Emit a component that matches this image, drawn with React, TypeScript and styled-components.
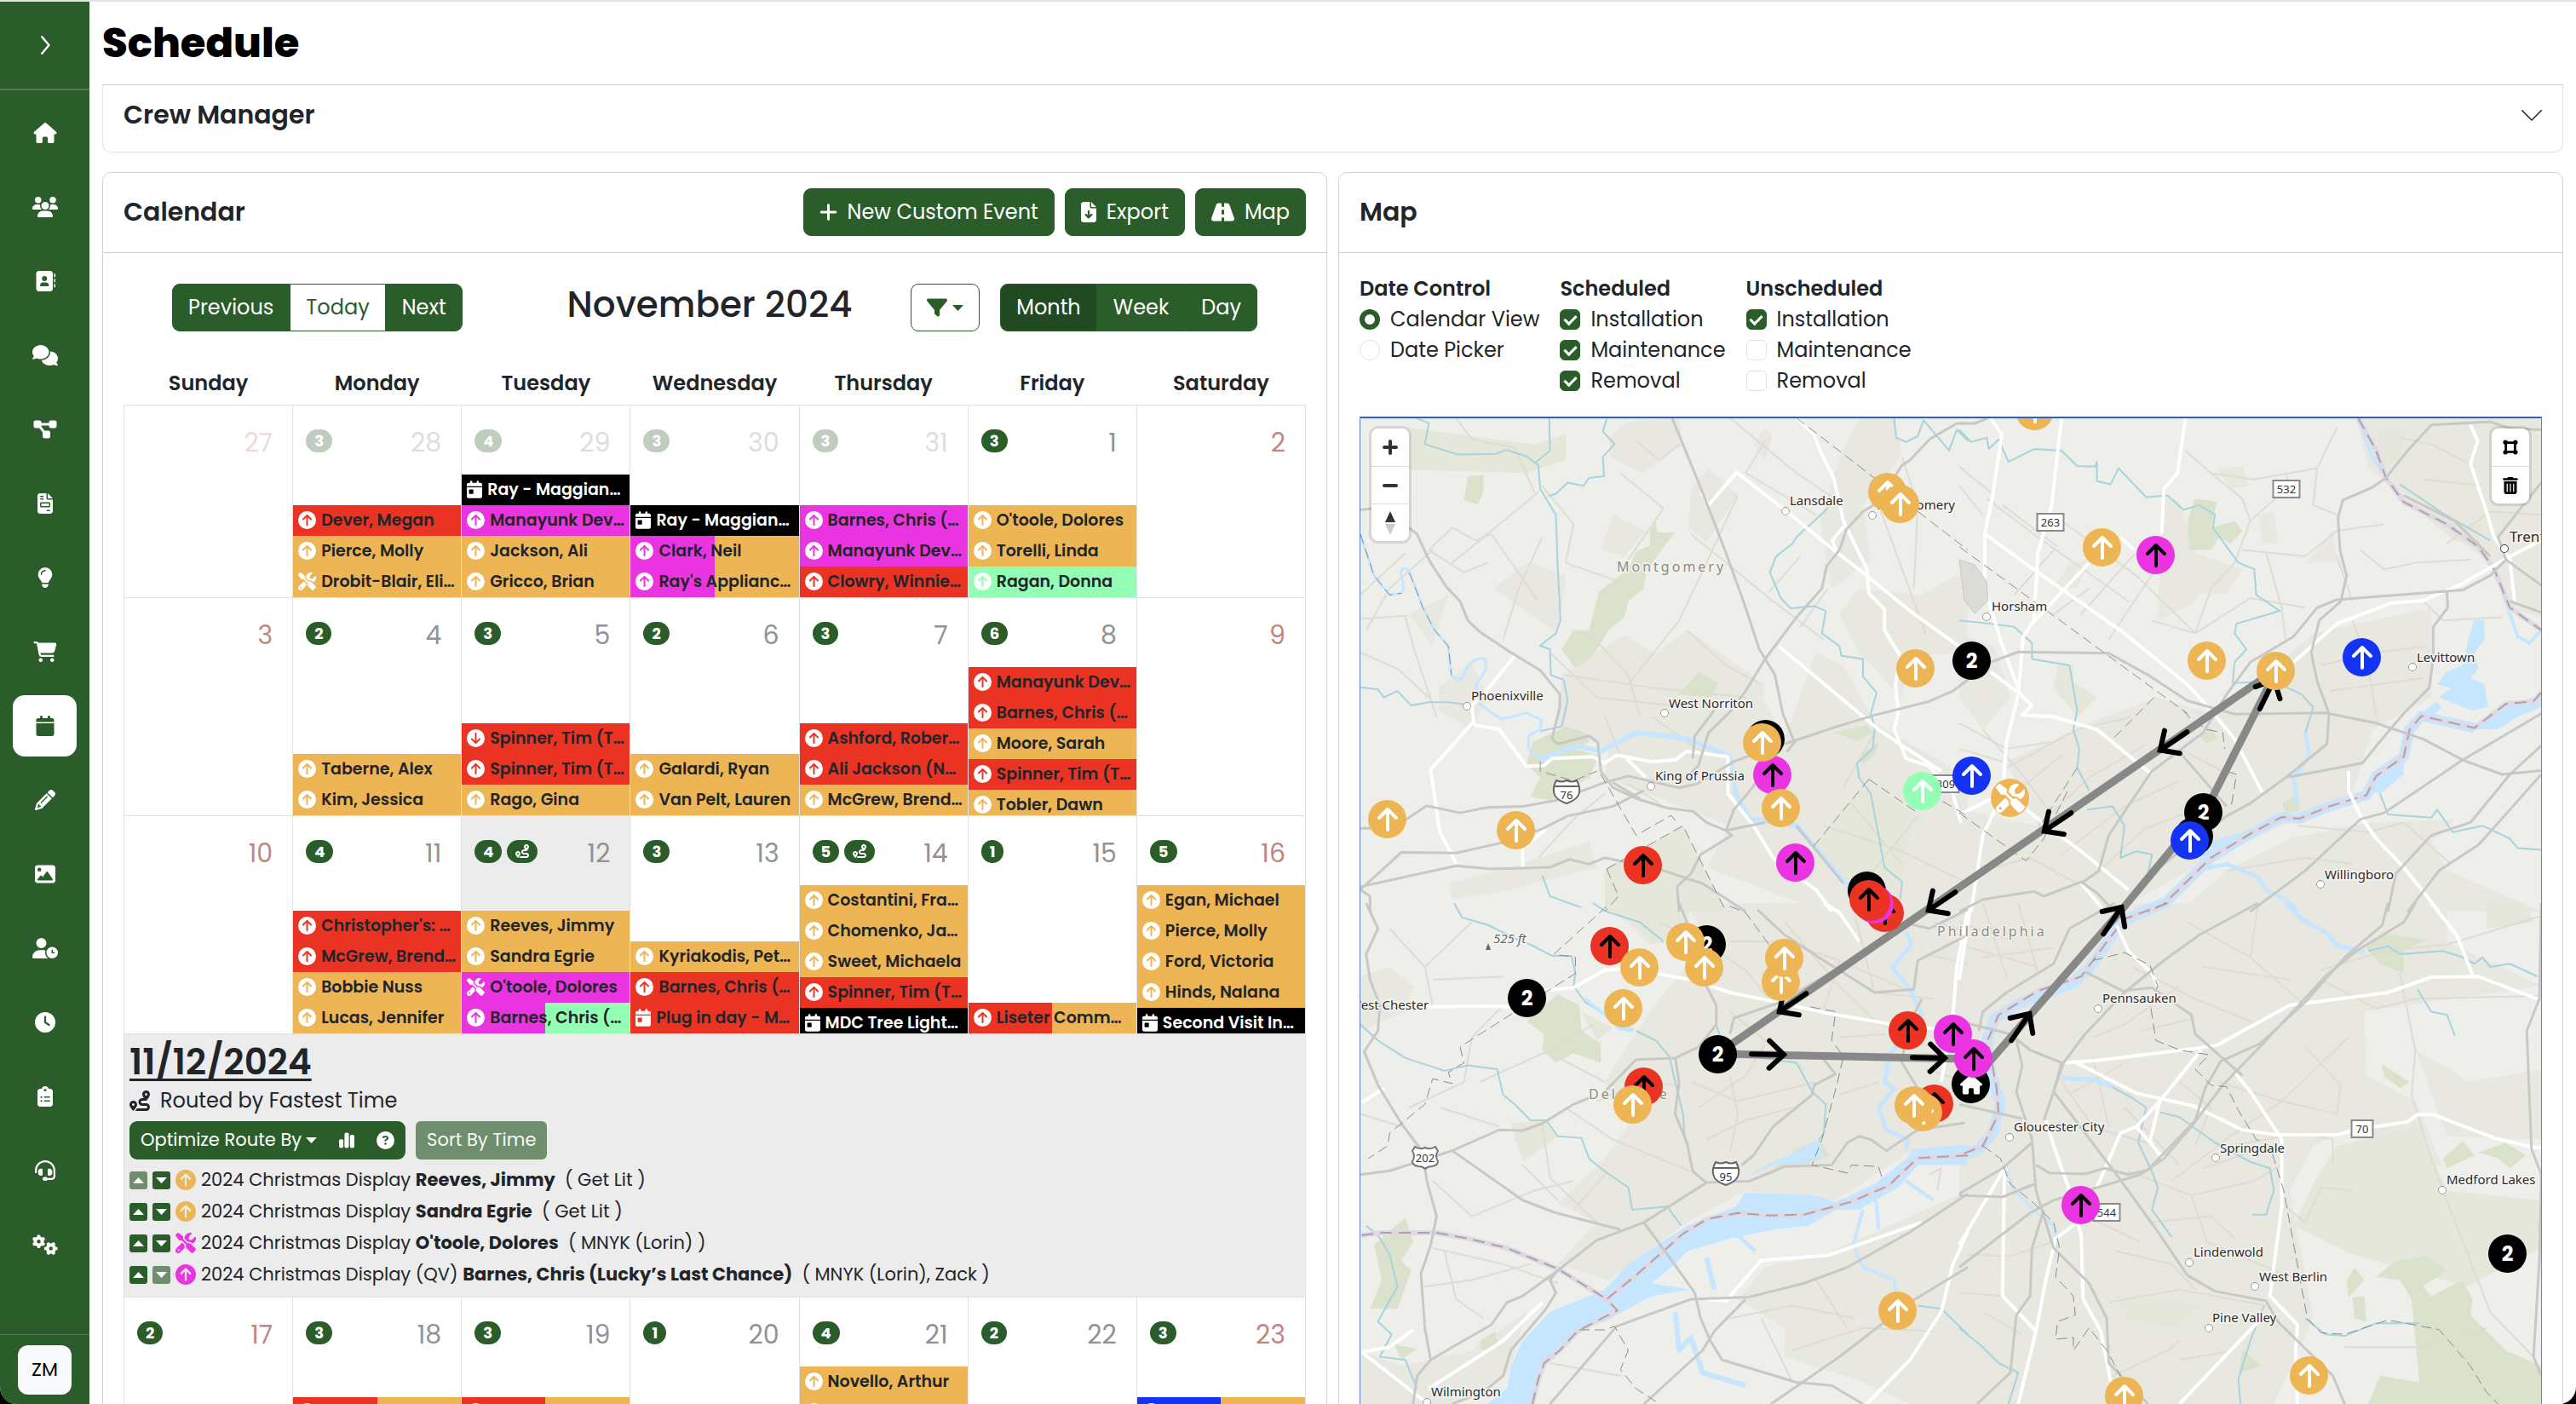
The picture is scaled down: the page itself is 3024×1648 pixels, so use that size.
import React, { useState } from "react";
import styled, { createGlobalStyle, css } from "styled-components";
import {
  FaHouse, FaUsers, FaAddressBook, FaComments, FaDiagramProject, FaFileInvoice, FaLightbulb,
  FaCartShopping, FaCalendar, FaPencil, FaImage, FaUserClock, FaClock, FaClipboardList,
  FaHeadset, FaGears, FaPlus, FaFileArrowDown, FaRoad, FaFilter, FaRoute, FaChartSimple,
  FaCircleQuestion, FaCircleArrowUp, FaCircleArrowDown, FaScrewdriverWrench, FaCalendarDay,
  FaTrashCan,
} from "react-icons/fa6";

const green = "#2b5d2a";
const ink = "#212529";
const line = "#dee2e6";
const edge = "#d2d2d4";

const GlobalStyle = createGlobalStyle`
  * { box-sizing: border-box; }
  body {
    margin: 0;
    background: #000;
    color: ${ink};
    font-family: Poppins, Inter, "Open Sans", sans-serif;
    font-size: 24px;
    line-height: 36px;
  }
  button, input { font: inherit; margin: 0; }
  button { cursor: pointer; }
`;

/* ---------- shell ---------- */

const Shell = styled.div`
  display: flex;
  height: 100vh;
  overflow: hidden;
  background: #fff;
  border-top: 2px solid #e1e1e1;
  border-radius: 0 0 20px 20px;
`;

const Sidebar = styled.nav`
  display: flex;
  flex-direction: column;
  align-items: center;
  flex: none;
  width: 105px;
  background: ${green};
`;

const SidebarToggle = styled.button`
  display: grid;
  place-items: center;
  width: 100%;
  height: 104px;
  padding: 0;
  border: 0;
  border-bottom: 2px solid #55795a;
  background: none;
  color: #fff;
`;

const NavList = styled.ul`
  display: flex;
  flex-direction: column;
  gap: 15px;
  flex: 1;
  margin: 0;
  padding: 14px 0 0;
  list-style: none;
`;

const NavLink = styled.a<{ $active?: boolean }>`
  display: grid;
  place-items: center;
  width: 75px;
  height: 72px;
  border-radius: 14px;
  color: ${(p) => (p.$active ? green : "#fff")};
  background: ${(p) => (p.$active ? "#fff" : "none")};
  svg { display: block; height: 24px; width: 30px; }
`;

const Account = styled.div`
  width: 100%;
  padding: 12px 21px 11px;
  border-top: 1px solid #55795a;
`;

const Avatar = styled.button`
  width: 100%;
  height: 58px;
  padding: 0;
  border: 0;
  border-radius: 12px;
  background: #f8f9fa;
  color: #000;
  font-size: 22px;
`;

const Main = styled.main`
  flex: 1;
  min-width: 0;
  padding: 16px 15px 0 15px;
`;

const PageTitle = styled.h1`
  margin: 0 0 15px;
  font-size: 48px;
  line-height: 66px;
  font-weight: 800;
  color: #000;
`;

const CrewPanel = styled.button`
  display: flex;
  justify-content: space-between;
  align-items: center;
  width: 100%;
  height: 80px;
  padding: 0 24px 8px;
  border: 1px solid ${line};
  border-top-color: #d0d0d0;
  border-radius: 0 0 10px 10px;
  background: #fff;
  color: ${ink};
  text-align: left;
`;

const Heading = styled.h2`
  margin: 0;
  font-size: 30px;
  font-weight: 600;
`;

const Columns = styled.div`
  display: grid;
  grid-template-columns: minmax(0, 1fr) minmax(0, 1fr);
  gap: 13px;
  margin-top: 23px;
`;

const Card = styled.section`
  border: 1px solid ${edge};
  border-radius: 10px;
  background: #fff;
`;

const CardHeader = styled.header`
  display: flex;
  justify-content: space-between;
  align-items: center;
  height: 94px;
  padding: 0 24px 2px;
  border-bottom: 1px solid ${edge};
`;

const CardBody = styled.div`
  padding: 24px;
`;

const HeaderActions = styled.div`
  display: flex;
  gap: 12px;
`;

/* ---------- buttons ---------- */

const Button = styled.button<{ $tone?: "solid" | "active" | "outline" }>`
  display: inline-flex;
  align-items: center;
  gap: 12px;
  height: 56px;
  padding: 0 18px;
  border: 1px solid ${green};
  border-radius: 9px;
  background: ${(p) => (p.$tone === "outline" ? "#fff" : p.$tone === "active" ? "#224a22" : green)};
  color: ${(p) => (p.$tone === "outline" ? green : "#fff")};
  white-space: nowrap;
`;

const Glyph = styled.span<{ $w: number }>`
  display: inline-flex;
  flex: none;
  width: ${(p) => p.$w}px;
  svg { width: 100%; }
`;

const ButtonGroup = styled.div`
  display: inline-flex;
  & > button { border-radius: 0; }
  & > button:first-child { border-radius: 9px 0 0 9px; }
  & > button:last-child { border-radius: 0 9px 9px 0; }
`;

const FilterButton = styled(Button)`
  gap: 6px;
`;

const Toolbar = styled.div`
  display: grid;
  grid-template-columns: 1fr auto 1fr;
  align-items: center;
  padding: 12px 57px 35px;
`;

const ToolbarEnd = styled.div`
  display: flex;
  justify-content: flex-end;
  gap: 24px;
`;

const MonthTitle = styled.h3`
  margin: 0 12px 6px 0;
  font-size: 42px;
  line-height: 48px;
  font-weight: 500;
`;

/* ---------- calendar ---------- */

const Calendar = styled.table`
  width: 100%;
  table-layout: fixed;
  border-collapse: collapse;
  th { height: 51px; padding: 2px 0 0; font-weight: 600; }
  td { padding: 0; border: 1px solid ${line}; vertical-align: top; }
`;

const DayBox = styled.div<{ $tall?: boolean; $selected?: boolean }>`
  display: flex;
  flex-direction: column;
  height: ${(p) => (p.$tall ? 255 : 225)}px;
  background: ${(p) => (p.$selected ? "#ececec" : "#fff")};
`;

const DayHead = styled.div<{ $muted?: boolean }>`
  display: flex;
  align-items: center;
  gap: 6px;
  flex: none;
  height: 81px;
  padding: 2px 23px 0 15px;
  opacity: ${(p) => (p.$muted ? 0.3 : 1)};
`;

const CountBadge = styled.span`
  display: grid;
  place-items: center;
  height: 27px;
  padding: 0 10px;
  border-radius: 14px;
  background: ${green};
  color: #fff;
  font-size: 18px;
  line-height: 27px;
  font-weight: 700;
`;

const DayNumber = styled.span<{ $weekend?: boolean }>`
  margin-left: auto;
  padding-top: 6px;
  font-size: 30px;
  color: ${(p) => (p.$weekend ? "#c08782" : "#909294")};
`;

const EventList = styled.ul`
  flex: 0 1 auto;
  min-height: 0;
  margin: auto 0 0;
  padding: 0;
  overflow: hidden;
  list-style: none;
`;

const tones: Record<string, string> = {
  o: "#edb554", r: "#ea3323", m: "#ea33e1", k: "#000", g: "#92ffb4", b: "#1433f5",
};

const EventRow = styled.li<{ $from: string; $to: string }>`
  height: 36px;
  background: ${(p) => `linear-gradient(90deg, ${tones[p.$from]} 50%, ${tones[p.$to]} 50%)`};
  color: ${(p) => (p.$from === "k" ? "#fff" : ink)};
`;

const EventLink = styled.a`
  display: flex;
  align-items: center;
  gap: 6px;
  height: 36px;
  padding-left: 6px;
  overflow: hidden;
  color: inherit;
  font-size: 19px;
  font-weight: 600;
  text-decoration: none;
  white-space: nowrap;
  svg { color: #fff; height: 21px; }
`;

/* ---------- selected day ---------- */

const DayPanel = styled.div`
  height: 308px;
  padding: 6px 6px 0;
  background: #ececec;
`;

const DayTitle = styled.h3`
  margin: 0;
  font-size: 42px;
  line-height: 54px;
  font-weight: 600;
  text-decoration: underline;
  text-decoration-thickness: 3px;
  text-underline-offset: 5px;
`;

const RouteNote = styled.p`
  display: flex;
  align-items: center;
  gap: 12px;
  margin: 0;
`;

const RouteActions = styled.div`
  display: flex;
  gap: 12px;
  padding: 6px 0;
`;

const SmallButton = styled.button`
  display: inline-flex;
  align-items: center;
  gap: 5px;
  height: 45px;
  padding: 0 13px;
  border: 0;
  border-radius: 6px;
  background: ${green};
  color: #fff;
  font-size: 21px;
  &:disabled { opacity: 0.65; }
`;

const StopList = styled.ol`
  display: grid;
  grid-auto-rows: 37px;
  margin: 0;
  padding: 0;
  list-style: none;
`;

const Stop = styled.li<{ $tone: string }>`
  display: flex;
  align-items: center;
  gap: 6px;
  font-size: 21px;
  white-space: pre;
  & > svg { color: ${(p) => tones[p.$tone]}; flex: none; }
  b { font-weight: 700; }
`;

const MoveButton = styled.button`
  display: grid;
  place-items: center;
  width: 21px;
  height: 21px;
  padding: 0;
  border: 0;
  border-radius: 3px;
  background: ${green};
  color: #fff;
  &:disabled { opacity: 0.65; }
`;

/* ---------- map options ---------- */

const Options = styled.div`
  display: flex;
  gap: 24px;
  margin-bottom: 24px;
`;

const OptionGroup = styled.fieldset`
  min-width: 0;
  height: 144px;
  margin: 0;
  padding: 0;
  border: 0;
  legend { padding: 0; font-weight: 600; }
`;

const Option = styled.label`
  display: flex;
  align-items: center;
  gap: 12px;
  height: 36px;
`;

const box = css`
  appearance: none;
  flex: none;
  width: 24px;
  height: 24px;
  border: 1px solid ${line};
  background: #fff;
`;

const Radio = styled.input.attrs({ type: "radio" })`
  ${box}
  border-radius: 50%;
  &:checked { border: 6px solid ${green}; }
`;

const Check = styled.input.attrs({ type: "checkbox" })`
  ${box}
  display: grid;
  place-items: center;
  border-radius: 6px;
  &:checked { border-color: ${green}; background: ${green}; }
  &:checked::before {
    content: "";
    width: 6px;
    height: 11px;
    margin-bottom: 3px;
    border: solid #fff;
    border-width: 0 3px 3px 0;
    transform: rotate(45deg);
  }
`;

/* ---------- map ---------- */

const MapFrame = styled.div`
  position: relative;
  height: 1180px;
  overflow: hidden;
  border: 1px solid #5b86d8;
  border-top: 2px solid #2b5fd0;
  background: #eeefeb;
`;

const MapDrawing = styled.svg`
  position: absolute;
  top: -2px;
  left: -1px;
  display: block;
  font-family: "Noto Sans", sans-serif;
`;

const PinButton = styled.button<{ $x: number; $y: number; $fill: string; $dark?: boolean }>`
  position: absolute;
  left: ${(p) => p.$x - 1597}px;
  top: ${(p) => p.$y - 491}px;
  display: grid;
  place-items: center;
  width: 45px;
  height: 45px;
  margin: -22px 0 0 -22px;
  padding: 0;
  border: 0;
  border-radius: 50%;
  background: ${(p) => p.$fill};
  color: ${(p) => (p.$dark ? "#000" : "#fff")};
  font-size: 24px;
  font-weight: 700;
  line-height: 24px;
`;

const MapControls = styled.div<{ $right?: boolean }>`
  position: absolute;
  top: 12px;
  ${(p) => (p.$right ? "right: 14px;" : "left: 13px;")}
  display: grid;
  width: 44px;
  border-radius: 8px;
  background: #fff;
  box-shadow: 0 0 0 3px rgba(0, 0, 0, 0.1);
`;

const ControlButton = styled.button`
  display: grid;
  place-items: center;
  height: 44px;
  padding: 0;
  border: 0;
  background: none;
  color: #000;
  & + & { border-top: 1px solid #ddd; }
`;

/* ---------- data ---------- */

const navItems = [
  { label: "Home", icon: FaHouse }, { label: "Customers", icon: FaUsers },
  { label: "Contacts", icon: FaAddressBook }, { label: "Messages", icon: FaComments },
  { label: "Projects", icon: FaDiagramProject }, { label: "Invoices", icon: FaFileInvoice },
  { label: "Ideas", icon: FaLightbulb }, { label: "Cart", icon: FaCartShopping },
  { label: "Schedule", icon: FaCalendar }, { label: "Design", icon: FaPencil },
  { label: "Photos", icon: FaImage }, { label: "Staff time", icon: FaUserClock },
  { label: "Time", icon: FaClock }, { label: "Tasks", icon: FaClipboardList },
  { label: "Support", icon: FaHeadset }, { label: "Settings", icon: FaGears },
];

type Ev = [tone: string, name: string, icon?: "down" | "tools" | "cal"];
type Day = { n: number; count?: number; muted?: boolean; route?: boolean; selected?: boolean; events?: Ev[] };

const weeks: Day[][] = [
  [
    { n: 27, muted: true },
    { n: 28, muted: true, count: 3, events: [["r", "Dever, Megan"], ["o", "Pierce, Molly"], ["o", "Drobit-Blair, Eli…", "tools"]] },
    { n: 29, muted: true, count: 4, events: [["k", "Ray - Maggian…", "cal"], ["m", "Manayunk Dev…"], ["o", "Jackson, Ali"], ["o", "Gricco, Brian"]] },
    { n: 30, muted: true, count: 3, events: [["k", "Ray - Maggian…", "cal"], ["mo", "Clark, Neil"], ["mo", "Ray's Applianc…"]] },
    { n: 31, muted: true, count: 3, events: [["m", "Barnes, Chris (…"], ["m", "Manayunk Dev…"], ["r", "Clowry, Winnie…"]] },
    { n: 1, count: 3, events: [["o", "O'toole, Dolores"], ["o", "Torelli, Linda"], ["g", "Ragan, Donna"]] },
    { n: 2 },
  ],
  [
    { n: 3 },
    { n: 4, count: 2, events: [["o", "Taberne, Alex"], ["o", "Kim, Jessica"]] },
    { n: 5, count: 3, events: [["r", "Spinner, Tim (T…", "down"], ["r", "Spinner, Tim (T…"], ["o", "Rago, Gina"]] },
    { n: 6, count: 2, events: [["o", "Galardi, Ryan"], ["o", "Van Pelt, Lauren"]] },
    { n: 7, count: 3, events: [["r", "Ashford, Rober…"], ["r", "Ali Jackson (N…"], ["o", "McGrew, Brend…"]] },
    { n: 8, count: 6, events: [["r", "Manayunk Dev…"], ["r", "Barnes, Chris (…"], ["o", "Moore, Sarah"], ["r", "Spinner, Tim (T…"], ["o", "Tobler, Dawn"]] },
    { n: 9 },
  ],
  [
    { n: 10 },
    { n: 11, count: 4, events: [["r", "Christopher's: …"], ["r", "McGrew, Brend…"], ["o", "Bobbie Nuss"], ["o", "Lucas, Jennifer"]] },
    { n: 12, count: 4, route: true, selected: true, events: [["o", "Reeves, Jimmy"], ["o", "Sandra Egrie"], ["m", "O'toole, Dolores", "tools"], ["mg", "Barnes, Chris (…"]] },
    { n: 13, count: 3, events: [["o", "Kyriakodis, Pet…"], ["r", "Barnes, Chris (…"], ["r", "Plug in day - M…", "cal"]] },
    { n: 14, count: 5, route: true, events: [["o", "Costantini, Fra…"], ["o", "Chomenko, Ja…"], ["o", "Sweet, Michaela"], ["r", "Spinner, Tim (T…"], ["k", "MDC Tree Light…", "cal"]] },
    { n: 15, count: 1, events: [["ro", "Liseter Comm…"]] },
    { n: 16, count: 5, events: [["o", "Egan, Michael"], ["o", "Pierce, Molly"], ["o", "Ford, Victoria"], ["o", "Hinds, Nalana"], ["k", "Second Visit In…", "cal"]] },
  ],
  [
    { n: 17, count: 2 },
    { n: 18, count: 3, events: [["ro", "Liseter Comm…"], ["o", "Pierce, Molly"], ["o", "Kim, Jessica"]] },
    { n: 19, count: 3, events: [["ro", "Spinner, Linda"], ["o", "Rago, Gina"], ["o", "Jackson, Ali"]] },
    { n: 20, count: 1 },
    { n: 21, count: 4, events: [["o", "Novello, Arthur"], ["o", "Galardi, Ryan"], ["o", "Moore, Sarah"], ["o", "Tobler, Dawn"]] },
    { n: 22, count: 2 },
    { n: 23, count: 3, events: [["bo", "Christine Holt"], ["o", "Ford, Victoria"], ["o", "Hinds, Nalana"]] },
  ],
];

const stops = [
  { tone: "o", title: "2024 Christmas Display ", who: "Reeves, Jimmy", crew: "  ( Get Lit )" },
  { tone: "o", title: "2024 Christmas Display ", who: "Sandra Egrie", crew: "  ( Get Lit )" },
  { tone: "m", title: "2024 Christmas Display ", who: "O'toole, Dolores", crew: "  ( MNYK (Lorin) )", tools: true },
  { tone: "m", title: "2024 Christmas Display (QV) ", who: "Barnes, Chris (Lucky’s Last Chance)", crew: "  ( MNYK (Lorin), Zack )" },
];

/* Pins, back to front: x, y, tone, glyph ("u" arrow up, "2" cluster, "t" tools, "h" home, "" plain) */
const pins: [number, number, string, string][] = [
  [2215, 577, "o", "u"], [2230, 591, "o", "u"], [2248, 784, "o", "u"], [2314, 775, "k", "2"],
  [2072, 867, "k", ""], [2080, 909, "m", "u"], [2068, 871, "o", "u"], [2090, 948, "o", "u"],
  [2256, 928, "g", "u"], [2314, 910, "b", "u"], [1628, 961, "o", "u"], [1779, 974, "o", "u"],
  [1928, 1015, "r", "u"], [2107, 1012, "m", "u"], [2191, 1045, "k", ""], [2212, 1071, "r", "u"],
  [2200, 1061, "m", ""], [2196, 1058, "r", ""], [2193, 1055, "r", "u"],
  [2388, 482, "o", "u"], [2467, 642, "o", "u"], [2530, 651, "m", "u"], [2590, 775, "o", "u"],
  [2671, 787, "o", "u"], [2772, 771, "b", "u"], [2359, 936, "o", "t"], [2586, 953, "k", "2"],
  [2575, 981, "k", ""], [2570, 986, "b", "u"],
  [1889, 1110, "r", "u"], [2003, 1108, "k", "2"], [1978, 1105, "o", "u"], [2000, 1135, "o", "u"],
  [1924, 1135, "o", "u"], [1905, 1183, "o", "u"], [1792, 1171, "k", "2"], [2090, 1152, "o", "u"],
  [2094, 1124, "o", "u"], [2016, 1237, "k", "2"], [2239, 1209, "r", "u"], [2313, 1272, "k", "h"],
  [2292, 1213, "m", "u"], [2316, 1242, "m", "u"], [1929, 1275, "r", "u"], [1916, 1296, "o", "u"],
  [2270, 1295, "r", "u"], [2257, 1305, "o", "u"], [2246, 1297, "o", "u"],
  [2227, 1538, "o", "u"], [2442, 1414, "m", "u"], [2943, 1471, "k", "2"], [2710, 1614, "o", "u"],
  [2493, 1638, "o", "u"],
];

/* Terrain is stored per quadrant, each in its own local grid. */
type Quad = {
  m: string; urban: string[]; wood: string[]; pale?: string[]; lake?: string[];
  river: [number, string][]; stream: string; minor: string; road: string; white: string; border?: string; dash: string;
};

const quads: Quad[] = [
  {
    m: "matrix(.4592 0 0 .3763 1590 480)",
    urban: [
      "530,830 690,705 770,765 850,688 1050,860 1045,905 1100,1030 1180,760 1250,800 1330,980 1568,1150 1568,1568 1200,1568 900,1430 960,1300 640,1150 650,1060 520,990",
      "650,90 700,40 830,30 840,110 735,200 655,150", "860,250 905,185 980,270 900,415 855,370",
      "630,440 660,330 745,380 690,460", "1190,350 1240,150 1290,30 1380,30 1400,140 1300,300 1320,470 1220,560",
      "1240,640 1290,560 1450,580 1568,500 1568,760 1420,770 1400,900 1290,760", "215,870 300,790 340,900 300,1000 215,940",
      "140,640 240,580 200,740", "355,560 445,478 540,520 520,700", "1020,110 1050,60 1068,80 1050,160", "240,1480 400,1430 600,1350 620,1430 400,1500 250,1530",
    ],
    wood: [
      "770,350 775,385 820,385 790,430 745,510 740,560 700,600 690,650 650,690 610,770 565,810 530,750 560,690 600,690 610,640 625,570 700,500 720,445 755,425 755,380",
      "290,210 330,205 330,260 315,298 280,285", "455,1040 540,990 590,1010 600,1040 560,1060 625,1080 600,1150 500,1220 450,1210 475,1150 440,1110",
      "830,890 880,820 930,855 910,900", "1225,1010 1310,985 1325,1010 1285,1035", "1290,1080 1340,1040 1335,1070 1300,1110",
    ],
    pale: ["140,60 460,110 540,80 540,160 440,200 140,190", "1170,1370 1310,1160 1430,1270 1380,1568 1250,1480", "640,1435 840,1300 950,1568 640,1568"],
    river: [
      [6, "M475 1092 L570 1052 L630 1068 L720 1010 L850 1028 L960 1085 L975 1200 L1010 1280 L1090 1290 L1130 1300 L1200 1400 L1270 1500"],
      [3, "M15 390 L50 520 L90 580 L120 575 Q130 560 118 510 Q130 480 145 520 L175 620 L205 690 L240 740 L248 830 Q265 860 280 830 Q290 780 330 777 Q350 800 310 860 L320 920 L375 968 L440 948 L478 970 L475 1000 L445 1020 L445 1060 L475 1092"],
    ],
    stream: "M158 28 L190 45 L180 110 L265 142 L360 140 L388 128 L440 148 L470 175 L475 250 L515 330 L520 500 L527 660 L515 700 L475 738 L500 750 L502 830 L535 845 L545 910 L530 990 L475 1005 M498 28 L500 130 L465 165 M645 30 L635 70 L665 110 L635 150 L638 210 L600 215 L585 240 L545 230 L515 265 L495 272 M1210 310 L1130 400 L1120 420 L1078 460 L1062 510 L1090 590 L1115 622 L1175 615 L1205 630 L1195 700 L1240 740 L1245 770 L1300 780 L1300 835 L1335 885 L1320 950 L1330 990 L1325 1060 L1285 1105 L1290 1150 L1320 1200 L1340 1330 L1355 1430 L1400 1475 L1395 1530 M15 868 L60 875 L75 900 L110 880 L145 925 L190 915 L240 915 L300 925 M1380 30 L1385 90 L1410 103 L1440 85 L1455 35 L1520 130 L1540 65 L1568 100 M480 1455 L500 1520 L580 1555",
    minor: "M260 28 L300 95 L410 120 L460 260 M470 260 L400 330 L250 480 M250 370 L190 440 L280 510 L340 480 M250 370 L310 410 L350 390 L470 600 M15 655 L130 645 L150 740 L210 960 M15 760 L110 810 L190 900 M480 240 L560 360 L540 480 L680 540 M680 200 L790 310 L700 470 M960 28 L1130 200 L1240 290 M860 390 L1060 590 L1200 720 M980 270 L900 480 L830 660 L700 860 M1050 100 L1000 200 L1180 330 M500 760 L620 900 L850 930 M540 830 L760 870 L1000 900 M600 700 L700 830 L730 960 M850 690 L950 800 L1040 860 M1210 560 L1140 680 M1140 460 L1060 570 M640 1200 L560 1280 L470 1400 M700 1170 L780 1230 M15 580 L130 450 M30 690 L90 560 L200 440 M640 960 L680 1080 M760 960 L900 1080 M1330 1010 L1250 1180 M1270 1230 L1400 1420 M1440 1270 L1300 1480 M1200 1300 L1400 1380 L1568 1480 M1400 150 L1440 300 L1430 560 M1340 300 L1460 700 M720 100 L780 160 L830 110 M480 400 L420 560 L380 720",
    road: "M812 28 L890 260 L950 450 L1000 620 L1035 750 L1075 830 L1095 950 L1125 1040 L1105 1070 M15 315 L60 308 L110 345 L160 390 L190 470 L235 555 L270 600 L290 660 L320 695 L400 760 L475 815 L525 890 L525 930 L505 1030 L520 1045 L600 1020 L622 1040 L630 1130 L660 1180 L720 1215 L800 1245 L865 1255 L900 1290 L950 1315 L1050 1290 M15 1308 L60 1308 L120 1290 L185 1238 L270 1260 L340 1243 L430 1240 L520 1220 L640 1165 L700 1145 L830 1182 L875 1170 L970 1100 L1060 1060 L1125 1035 L1210 1000 L1330 955 L1470 912 L1530 880 L1568 845 M1568 45 L1540 45 L1470 95 L1420 160 L1400 175 L1340 290 L1300 320 L1258 375 L1240 440 L1207 490 L1195 560 L1130 650 L1050 780 L1000 880 L960 945 L905 1010 L880 1110 L850 1150 M950 1315 L970 1250 L1005 1200 L1080 1080 M1130 1300 L1250 1480 M950 1315 L965 1330 L885 1390 L860 1450 L825 1490 L830 1568 M15 1500 L120 1383 L260 1385 L370 1355 L480 1310 L545 1270 L660 1240 L740 1190 M15 1490 L260 1425 L350 1435 L500 1430 L550 1405 L600 1420 L640 1400 L790 1440 L850 1465 L890 1480 L1000 1568 M15 1500 L40 1520 L40 1568 M865 1090 L870 1020 L920 940 M660 1165 L730 1215",
    white: "M888 262 L905 300 L977 198 L1100 315 L1225 440 L1310 520 L1420 630 L1568 760 M1130 28 L1175 80 L1190 130 L1225 215 L1250 350 L1310 500 L1315 575 L1355 625 L1355 690 L1395 770 L1383 860 L1390 950 L1380 1000 L1410 1090 L1470 1115 L1530 1200 L1550 1290 M1255 360 L1222 410 L1230 440 M1085 740 L1340 1000 L1400 1050 L1500 1130 M410 770 L330 890 L300 925 L305 975 L250 1050 L195 1125 L208 1235 L218 1320 L245 1380 L260 1420 M305 985 L370 1000 L440 1115 L485 1112 L505 1090 L610 1085 L640 1105 L670 1080 L760 1100 L820 1095 L850 1068 L955 1085 L955 1200 L1020 1300 L1070 1400 L1110 1440 L1180 1500 L1220 1568 M695 1090 L745 1150 M430 1430 L430 1370 L490 1310",
    dash: "M1130 28 L1568 440 M1315 1155 L1170 1370 M1315 1155 L1440 1260 M1470 1200 L1568 1270 M630 1140 L720 1330 L810 1268 L825 1290 M645 1435 L840 1300 L950 1568 M645 1435 L675 1520 L640 1568 M475 1100 L475 1130 L560 1160 L620 1130 M15 390 L50 520 L90 580 L120 575 M140 510 L175 620 L205 690 L240 740 L248 830",
  },
  {
    m: "matrix(.4617 0 0 .3763 2300 480)",
    urban: [
      "330,980 500,900 640,950 760,850 900,700 1200,620 1200,900 1050,1000 1000,1200 640,1400 400,1568 0,1568 0,1250 200,1300 120,1100",
      "520,270 560,290 600,450 720,500 680,580 610,575 590,610 505,660 510,500", "1010,30 1480,30 1480,650 1400,620 1350,480 1110,260 1040,180",
      "560,1568 680,1440 840,1340 1040,1290 1260,1280 1200,1350 1240,1440 1480,1568", "0,700 90,740 130,900 60,1000 0,900",
      "655,185 720,180 735,240 690,250", "760,330 800,320 810,420 770,420", "280,480 330,470 300,560 240,560", "950,380 960,480 880,480",
    ],
    wood: [
      "580,350 600,280 655,290 640,370 700,350 720,380 690,420 660,400 640,440 585,440", "610,1020 640,995 655,1025 630,1045",
      "820,1230 860,1200 865,1255 830,1258",
    ],
    pale: ["250,800 290,800 290,850 350,900 300,960 240,870", "1180,330 1330,360 1320,430 1260,410", "1060,70 1140,60 1120,150 1080,180"],
    lake: [
      "1310,655 1335,660 1335,720 1310,760 1320,810 1300,840 1335,860 1345,930 1300,940 1220,900 1250,870 1215,860 1240,820 1280,800 1290,740",
      "1390,920 1460,900 1480,885 1480,930 1420,960 1370,1000 1310,1000 1350,960", "1175,950 1215,910 1225,935 1195,965",
      "1040,1190 1130,1090 1130,1140 1070,1200", "850,1290 980,1215 1035,1200 1000,1230 900,1275", "580,1480 640,1350 750,1310 740,1330 640,1420",
    ],
    river: [
      [4, "M1015 30 L1050 150 L1085 215 L1130 290 L1240 360 L1320 430 L1360 500 L1395 620 L1420 710 L1450 730 L1480 690"],
      [12, "M1310 995 L1175 958 L1145 1000 L1130 1085 L1060 1145 L1035 1205 L940 1240 L865 1278 L820 1273 L740 1325 L640 1400 L520 1545 L460 1568"],
      [5, "M600 1440 L680 1420 L760 1460 L780 1500 L830 1530 L860 1568"], [5, "M880 1010 L890 1080 L850 1150 L860 1230"],
    ],
    stream: "M0 65 L30 103 L70 90 L75 125 L100 95 L125 165 L190 125 L260 130 L300 178 L345 180 L350 165 L350 225 L385 235 L405 185 L475 275 L530 270 L570 315 L610 300 L650 330 L645 370 L680 430 L710 480 L750 500 L755 580 L815 630 L705 670 L700 700 L730 750 L700 790 L695 855 L800 850 L870 890 L900 930 L880 1010 M0 660 L80 670 L140 680 L185 730 L185 780 L280 800 L300 940 L290 1000 L305 1060 L300 1120 L330 1190 M325 1250 L390 1240 L420 1300 L410 1400 L450 1380 L490 1390 L480 1450 L460 1500 M1120 235 L1235 330 L1350 410 M1070 1200 L1090 1265 L1200 1275 L1215 1250 L1255 1320 L1330 1300 L1400 1340 L1420 1370 L1480 1375",
    minor: "M0 180 L80 260 M70 280 L200 400 L430 600 M110 300 L250 430 M0 240 L60 330 M250 340 L340 420 L450 520 L600 700 M140 580 L240 440 M240 640 L330 560 M310 640 L440 460 L510 400 M380 720 L450 590 L500 500 M575 130 L640 200 L720 280 L740 350 L700 480 L640 560 L600 700 M740 350 L840 240 L830 200 M640 200 L750 220 L910 185 L960 60 M910 185 L900 300 L960 330 M720 440 L880 460 L960 380 L1080 360 M960 460 L1000 600 M1020 440 L1080 500 L1160 480 L1300 470 M780 450 L820 620 L830 720 M490 660 L600 700 L740 590 L880 620 M0 980 L120 1060 L230 1040 M60 1000 L160 1140 L220 1240 M120 1120 L300 1000 L440 960 M140 1200 L260 1080 M200 1300 L330 1150 L470 1050 M260 1390 L420 1240 L560 1160 M340 1460 L470 1310 L600 1250 M1000 660 L1040 800 L1060 960 M920 800 L1060 760 L1190 740 M940 880 L1180 840 M1180 600 L1230 660 L1380 650 M560 1060 L700 1150 M860 1300 L1040 1320 L1130 1290 L1250 1420 M680 1440 L880 1400 L1000 1420 M0 1060 L110 1100 M100 1410 L240 1300 M60 1440 L180 1400 L300 1480 M1120 90 L1200 110 L1310 180 M1180 220 L1330 240 M1240 420 L1350 320 L1480 330",
    road: "M0 45 L40 45 L70 30 M1480 65 L1400 60 L1350 40 L1200 50 L1140 130 L1085 215 L1050 245 L975 285 L963 340 L968 440 L985 520 L970 600 L915 660 L895 760 L910 850 L940 950 L935 1045 L880 1100 L830 1150 L740 1230 L680 1270 L640 1310 L540 1400 L490 1450 L410 1568 M0 865 L80 790 L150 758 L380 762 L480 830 L580 910 L700 952 L930 948 L1060 980 L1180 1030 L1280 1095 L1380 1140 L1480 1128 M680 890 L740 790 L850 710 L910 620 L960 595 L1140 578 L1280 565 L1350 520 L1390 470 L1370 400 L1440 290 L1480 230 M1240 570 L1242 620 L1205 680 L1205 780 L1195 870 L1130 950 L1085 1015 L1025 1105 L830 1150 M310 1480 L355 1440 L380 1330 L440 1220 L490 1130 L620 1010 L680 890 M0 1568 L60 1530 L190 1505 L215 1520 L310 1475 L350 1510 L395 1568 M560 1070 L680 1240 M740 1568 L880 1440 L1020 1280 L1080 1260 L1280 1095 L1480 950 M1090 1568 L1110 1450 L1200 1330 L1300 1290 L1400 1140 L1480 1050 M1140 1568 L1220 1440 L1320 1360 L1480 1140 M1390 470 L1480 550 M1400 600 L1480 635 M1130 270 L1260 350 L1350 460",
    white: "M80 30 L108 80 L85 270 L65 390 L65 560 L110 740 L155 890 L185 925 L160 955 L240 960 L350 1000 L490 1140 M65 390 L200 510 L420 700 L580 860 L640 940 L700 1030 L770 1195 M260 30 L235 300 L200 450 L190 660 L163 710 L150 890 L120 1040 L110 1200 L60 1330 L30 1568 M330 480 L185 670 M575 30 L555 200 L520 250 L515 390 M410 400 L445 440 M850 790 L960 670 L1100 605 L1180 598 L1280 545 L1400 460 L1480 410 M1300 50 L1318 100 L1300 170 L1335 300 L1360 400 L1400 470 L1412 600 M990 1130 L990 1190 L1020 1270 L1060 1340 L1130 1430 L1220 1568 M80 820 L155 890 M170 1250 L320 1390 L430 1500 M310 1480 L365 1560 M0 1265 L110 1200",
    border: "M1015 30 L1060 130 L1085 215 L1130 290 L1240 360 L1320 430 L1360 500 L1400 620 L1480 690 M1480 885 L1460 912 L1390 920 L1310 995 L1175 958 L1145 1000 L1130 1085 L1060 1145 L1035 1205 L940 1240 L865 1278 L820 1273 L740 1325 L640 1400 L520 1545 L480 1568",
    dash: "M0 430 L580 950 M495 900 L390 1030 M300 1120 L210 1290 M0 1260 L170 1410 L215 1340 L280 1180 M570 940 L590 970 L630 1000 L670 1010 L675 1060 M680 1130 L705 1140 L690 1250",
  },
  {
    m: "matrix(.4592 0 0 .375 1590 1060)",
    urban: [
      "640,560 760,330 900,120 850,0 1568,0 1568,760 1420,780 1230,930 1000,900 850,1000 650,1180 520,1130 620,1000 520,940 640,800 700,700",
      "15,230 90,200 150,260 130,340 15,400", "1568,900 1460,960 1200,1100 1050,1140 980,1240 1100,1330 1100,1420 1300,1500 1420,1568 1568,1568",
      "15,1400 120,1450 300,1400 440,1280 390,1480 250,1568 15,1568",
    ],
    wood: [
      "440,370 520,285 575,320 580,400 630,440 630,500 560,470 515,500 480,460 485,410", "50,1070 130,985 150,1060 120,1120 145,1150 110,1270 40,1270 70,1180",
      "1070,830 1130,770 1190,740 1215,790 1150,820", "320,1370 360,1340 370,1390 325,1400", "100,1380 160,1395 120,1430",
    ],
    pale: ["640,0 850,0 860,120 760,130", "400,690 480,680 520,730 430,810", "580,340 660,390 620,430"],
    lake: [
      "1568,755 1430,770 1410,800 1330,880 1230,935 1180,915 1000,905 975,950 850,1010 700,1130 640,1210 500,1280 430,1370 400,1450 390,1520 340,1568 455,1568 480,1450 520,1400 560,1340 640,1310 760,1230 860,1210 760,1190 820,1130 850,1090 960,1050 1080,1020 1160,1010 1230,960 1290,960 1390,890 1440,820 1568,820",
      "1000,860 1060,815 1130,780 1185,740 1200,790 1150,815 1080,815", "660,370 715,390 710,405 670,395",
    ],
    river: [
      [5, "M1410 90 L1425 130 L1375 200 L1420 270 L1450 350 L1410 420 L1370 470 L1355 560 L1380 580 L1340 640 L1360 710 L1415 740 L1410 770"],
      [6, "M820 1280 L830 1400 L860 1360 L890 1470 L1000 1510"], [4, "M1300 960 L1275 1070 L1300 1140 L1380 1180 L1385 1230"],
      [6, "M900 1110 L920 1210"], [5, "M980 1040 L1025 1090"], [4, "M590 300 L640 350 L690 390"], [4, "M1330 890 L1340 1020 M1410 870 L1480 930"],
    ],
    stream: "M255 0 L275 45 L340 68 L410 110 L450 130 L505 165 L555 165 L565 220 L560 260 L590 310 L640 350 L680 390 M15 380 L60 430 L130 485 L230 525 L290 508 L365 520 L380 600 L410 630 L450 680 L490 680 L520 730 L580 735 L600 800 L640 840 L700 890 L710 960 L800 950 L835 1010 M610 0 L640 25 L730 60 L790 120 M720 400 L770 430 L805 480 L820 560 L840 660 L845 740 M925 380 L940 440 L1010 480 L1130 500 L1170 590 L1205 630 L1200 720 L1175 760 M30 1010 L60 1040 L90 1100 L110 1200 L60 1310 L95 1350 L65 1420 L130 1430 L160 1520 M1440 1260 L1500 1270 L1568 1350",
    minor: "M90 80 L180 200 L200 320 M180 200 L300 60 M200 240 L380 230 M140 640 L280 560 L300 420 M300 420 L380 320 M320 560 L500 460 L610 380 M500 470 L640 560 M480 690 L500 860 L620 1000 M540 640 L660 740 L860 840 M620 620 L740 560 L820 570 M430 820 L520 930 M200 870 L300 980 L460 900 L560 870 M200 1080 L380 1130 L520 1190 M230 1090 L260 1240 L330 1300 M180 1200 L300 1180 L450 1130 M640 850 L560 960 M860 560 L980 620 L1180 560 M880 640 L1000 540 L1050 440 M900 740 L1000 680 L1120 640 M960 780 L980 660 L960 540 M960 340 L1060 440 L1150 520 M780 60 L900 130 L1000 210 L1060 300 M960 120 L1100 120 L1240 180 L1410 270 M1100 60 L1240 260 L1340 380 M1240 180 L1200 330 M1280 40 L1330 280 L1480 300 M1480 60 L1568 90 M1460 160 L1568 190 M1240 420 L1360 410 M1240 600 L1340 560 M1440 440 L1568 470 M1460 520 L1568 560 M1040 1300 L1120 1500 M960 1300 L1120 1260 L1280 1300 M1120 1400 L1300 1330 L1480 1340 M1180 1180 L1260 1330 M500 1440 L680 1480 M15 660 L120 700 M220 640 L370 700 M1470 850 L1500 830 L1490 900",
    road: "M30 0 L60 80 L30 160 L40 240 L65 320 L60 400 L25 465 L60 570 L120 690 L175 780 L185 870 L210 980 L195 1070 L170 1160 L180 1330 L195 1430 M15 850 L90 838 L250 775 L370 710 L430 712 L480 690 L560 630 L600 610 M250 775 L430 930 L510 968 L680 1022 M640 590 L720 490 L820 485 L880 450 L925 380 L925 320 L900 260 L850 60 L830 0 M820 485 L830 560 L820 660 L850 750 L865 840 L900 875 L1010 870 L1100 825 L1220 820 L1260 750 L1290 730 L1320 740 L1360 775 L1440 710 L1560 688 M900 875 L740 1000 L620 1055 L520 1150 L500 1180 L515 1220 L490 1270 M520 1150 L430 1230 L390 1250 L350 1320 L250 1390 L195 1430 L160 1480 L150 1568 M740 1000 L800 1100 L870 1220 L885 1300 L910 1370 L940 1430 L1130 1500 L1220 1510 L1300 1568 M500 1568 L670 1325 L860 1240 L1010 1233 L1150 1190 L1260 1140 L1420 1030 L1568 910 M740 1568 L890 1400 L920 1340 L1000 1240 M1065 1568 L1240 1420 L1420 1250 L1568 1140 M990 820 L1020 790 L1070 700 L1170 600 L1175 570 L1230 535 L1200 490 M490 1270 L400 1400 L380 1480 L330 1530 L250 1568 M1450 300 L1410 400 L1400 500 L1430 560 L1470 640 M1568 20 L1470 80 L1400 60 M1030 20 L1100 100 L1200 180 L1330 280 L1430 270 L1440 180 L1568 100 M960 410 L970 360 L1090 310 L1420 70",
    white: "M190 325 L330 322 L395 325 L480 275 L560 265 L640 210 L700 205 L860 240 L960 280 L1100 315 L1210 345 L1400 385 L1568 400 M18 625 L75 580 M90 310 L190 325 M1568 20 L1540 200 L1530 350 L1500 560 M900 1240 L950 1245 L1040 1118 L1210 1103 L1450 1000 M1568 1030 L1530 1130 L1500 1280 L1420 1430 L1310 1568 M18 1405 L180 1560 M18 1405 L90 1390 L150 1335 M480 1250 L380 1370 L190 1520 M1200 0 L1240 30 L1290 120",
    border: "M1568 790 L1440 798 L1365 885 L1270 935 L1150 975 L1060 978 L980 970 L900 990 L840 1035 L720 1165 L645 1240 L672 1275 L570 1340 L525 1400 L485 1440 L470 1490 L455 1568 M18 1040 L70 1032 L210 1032 L290 1050 L390 1080 L520 1145 L645 1240",
    dash: "M645 10 L510 160 L565 170 L565 220 L270 450 L280 500 L240 530 L250 565 L200 550 L180 630 L90 720 L85 760 L35 800 M960 10 L1000 30 L1060 130 M1165 325 L1230 340 L1220 430 L1250 480 L1235 560 L1195 740 L1170 820 L1260 845 L1270 820 L1340 825 L1350 865 M575 1336 L640 1336 L665 1325 L700 1400 L680 1460 L720 1520 L770 1560",
  },
  {
    m: "matrix(.4617 0 0 .375 2300 1060)",
    urban: [
      "0,0 1240,0 1240,120 1480,260 1030,340 1035,540 1160,620 1230,830 1000,700 900,760 840,900 900,1300 800,1568 0,1568",
      "1160,460 1300,560 1480,520 1480,740 1240,730",
    ],
    wood: [
      "1035,140 1080,95 1190,115 1130,150 1130,220 1070,190", "1075,505 1145,560 1120,580 1080,540", "1230,800 1280,745 1310,790 1240,830",
      "1320,780 1390,750 1440,790 1400,830 1370,800", "1060,1170 1110,1120 1190,1105 1240,1150 1180,1200 1200,1230 1280,1180 1305,1240 1300,1290 1390,1400 1480,1450 1480,1568 1040,1568 1070,1480 1170,1500 1150,1240 1120,1180",
      "985,1180 1005,1140 1030,1180 990,1235", "1000,1235 1030,1230 1035,1310 1005,1300", "720,1400 770,1450 710,1470",
    ],
    pale: ["960,760 1170,700 1240,900 1480,930 1480,1080 1290,1200 1000,1100 850,1010 900,880", "400,1230 620,1260 560,1330 430,1300", "1340,0 1440,0 1460,60 1340,80"],
    river: [
      [13, "M520 0 L410 60 L340 190 L290 250 L160 310 L90 360 L70 430 L80 530 L105 630 L85 720 L50 770 L0 790"],
      [5, "M830 0 L870 50 L930 90 L960 130 L1030 155"], [5, "M260 548 L340 552 L390 575"], [3, "M120 840 L140 900 L190 960 L240 1010 L250 1080"],
    ],
    stream: "M380 570 L440 610 L475 640 L455 750 L490 840 L505 890 L490 960 L540 1045 M510 655 L560 670 L650 750 L740 810 L790 830 L800 900 L780 975 L745 975 M1040 150 L1090 135 L1120 160 L1230 150 L1280 170 L1310 190 L1330 170 L1350 200 L1400 190 L1470 230 M1165 270 L1200 340 L1240 350 L1260 415 M0 1330 L60 1390 L100 1440 L150 1470 L125 1568 M775 1260 L740 1370 L710 1490 L715 1568 M880 1300 L930 1350 L980 1355 L1060 1315 L1170 1315",
    minor: "M0 60 L140 120 M0 130 L200 200 M60 0 L120 230 M150 0 L200 220 M240 140 L60 170 M580 60 L740 170 L870 310 M740 170 L760 0 M620 200 L840 240 M440 200 L600 300 L760 380 M460 400 L600 360 M340 420 L420 380 L560 260 M340 480 L380 700 M280 600 L420 500 M260 560 L340 700 L500 760 M430 840 L590 915 L630 1060 L820 1160 M590 915 L750 870 L820 820 M540 870 L700 720 L820 620 L990 420 M820 620 L960 660 L970 570 L880 450 M660 560 L820 620 M690 760 L870 720 L950 740 L950 820 M480 1000 L640 980 L700 1050 M400 1090 L540 1130 L600 1210 M380 1250 L560 1210 L780 1260 M320 980 L460 1060 M20 1100 L130 1105 L240 1060 M0 1220 L110 1230 M60 1280 L160 1350 M390 1480 L530 1400 L560 1370 M560 1430 L700 1400 M1120 220 L1160 460 L1150 600 L1200 800 L1230 900 M1230 900 L1350 1280 L1460 1420 M1160 300 L1480 290 M920 210 L1080 150 L1240 130 L1480 40 M920 240 L1060 330 L1160 300 M830 950 L880 1000 L920 890 L1000 900 M980 1390 L1160 1390 L1340 1330 M420 640 L560 820 M620 830 L740 780 M560 560 L640 640 L600 760",
    road: "M760 0 L610 100 L520 180 L420 280 L320 410 L265 500 L240 590 L215 680 M395 0 L280 80 L240 190 L120 280 L60 340 L50 400 M1160 0 L1130 60 L1010 150 L930 230 L870 310 L780 430 L670 570 L590 700 L520 800 L460 850 L380 880 L240 930 L180 970 L0 1140 M1090 0 L1075 70 L980 170 L880 310 L765 440 L665 495 L625 580 L600 680 L480 835 L430 850 L370 830 L320 848 L230 845 L195 820 M320 215 L415 275 L490 265 L590 350 L600 410 L720 540 M0 370 L130 410 L180 460 L260 500 L240 590 L320 720 L400 850 L500 1020 L580 1165 L650 1215 L780 1245 L810 1310 L950 1480 L980 1568 M140 400 L160 510 L145 590 L185 740 L195 900 L240 1080 L330 1190 L375 1300 L380 1440 L480 1568 M0 915 L110 920 L190 880 M0 630 L160 675 M45 1568 L130 1470 L145 1290 L180 1230 L185 1080 L215 960 M1480 0 L1475 300 L1443 400 L1455 770 L1480 850 L1475 1120 L1460 1420 L1480 1480 M0 910 L110 830 L185 750",
    white: "M30 0 L0 240 M400 70 L430 150 L490 220 L505 260 M270 500 L355 492 L600 455 L655 445 L840 320 L1090 280 L1200 232 L1320 230 L1470 300 M1200 0 L1265 100 L1305 225 M290 495 L450 595 L595 635 L720 710 L805 725 L960 725 L1030 705 L1140 685 L1165 662 L1205 662 L1360 735 L1460 765 L1480 765 M615 460 L510 620 L450 700 L410 720 L350 890 M510 620 L485 745 L515 800 M450 700 L520 800 M700 530 L740 590 L820 740 L820 950 L790 1230 L860 1320 L855 1410 L860 1568 M760 1310 L560 1568 M220 680 L240 760 L275 880 L310 1040 L315 1240 L360 1340 L385 1500 M115 830 L110 1230 L195 1340 M115 830 L0 1070 M300 1000 L245 1050 L220 1180 L195 1340 L150 1568",
    border: "M530 0 L420 50 L370 130 L310 230 L200 275 L100 350 L72 430 L95 580 L100 660 L60 760 L0 790",
    dash: "M340 180 L420 155 L485 195 L505 260 L485 310 L500 430 L560 460 L635 475 L600 520 L640 570 L680 575 L710 650 L755 740 L790 760 L825 900 L885 1300 L920 1345 L980 1350 L1090 1305 L1220 1335 L1300 1450 L1340 1530 L1370 1568 M60 760 L105 800 L130 880 L190 940 L240 1000 L255 1080 L245 1170 L290 1230 L295 1290 L250 1310 L245 1365 L290 1360 L290 1400 L330 1330 L375 1400 L410 1480",
  },
];

const towns: [string, number, number, number, number][] = [
  ["Lansdale", 2101, 593, 2096, 600], ["Montgomery", 2203, 598, 2198, 605], ["Phoenixville", 1727, 822, 1722, 829],
  ["West Norriton", 1959, 831, 1954, 837], ["King of Prussia", 1943, 916, 1938, 923], ["Horsham", 2338, 717, 2332, 724],
  ["Levittown", 2837, 777, 2832, 783], ["Willingboro", 2729, 1032, 2724, 1038], ["Gloucester City", 2364, 1328, 2359, 1335],
  ["Pennsauken", 2468, 1177, 2463, 1184], ["Springdale", 2606, 1353, 2601, 1359], ["Lindenwold", 2575, 1475, 2570, 1482],
  ["West Berlin", 2652, 1504, 2647, 1510], ["Pine Valley", 2597, 1552, 2593, 1559], ["Medford Lakes", 2872, 1390, 2867, 1397],
  ["Wilmington", 1680, 1639, 1675, 1646], ["West Chester", 1584, 1185, 1579, 1192],
];

const routeArrows: [number, number, number][] = [
  [2535, 881, 146], [2399, 976, 146], [2263, 1069, 146], [2088, 1188, 146], [2095, 1238, 1], [2284, 1242, 1],
  [2383, 1189, -56], [2491, 1064, -56], [2670, 797, -64],
];

/* ---------- parts ---------- */

function Chevron({ dir }: { dir: "right" | "down" }) {
  return (
    <svg width="24" height="24" viewBox="0 0 16 16" fill="none" stroke="currentColor" strokeWidth={dir === "right" ? 1.6 : 1} strokeLinecap="round" strokeLinejoin="round" aria-hidden="true">
      <path d={dir === "right" ? "M5.5 1.5 L11 8 L5.5 14.5" : "M.5 4.5 L8 12 L15.5 4.5"} />
    </svg>
  );
}

function Caret({ up }: { up?: boolean }) {
  return (
    <svg width="13" height="7" viewBox="0 0 13 7" fill="currentColor" aria-hidden="true">
      <path d={up ? "M0 7 L6.5 0 L13 7 Z" : "M0 0 L13 0 L6.5 7 Z"} />
    </svg>
  );
}

function PinGlyph({ glyph, dark }: { glyph: string; dark: boolean }) {
  if (glyph === "u") {
    return (
      <svg width="30" height="32" viewBox="0 0 30 32" fill="none" stroke={dark ? "#000" : "#fff"} strokeWidth="4" strokeLinecap="round" strokeLinejoin="round">
        <path d="M15 28 V5 M5 14 L15 4 L25 14" />
      </svg>
    );
  }
  if (glyph === "t") return <FaScrewdriverWrench size={34} />;
  if (glyph === "h") return <FaHouse size={26} />;
  return <>{glyph}</>;
}

function Shield({ x, y, label, kind }: { x: number; y: number; label: string; kind: "box" | "interstate" | "us" }) {
  const w = label.length === 2 ? 25 : 31;
  return (
    <g transform={`translate(${x} ${y})`}>
      {kind === "box" && <rect x={-w / 2} y="-10" width={w} height="20" fill="#fff" stroke="#8a8a8a" strokeWidth="2" />}
      {kind === "interstate" && (
        <>
          <path d="M-12 -13 Q-6 -10 0 -13 Q6 -10 12 -13 Q18 -2 13 6 Q9 11 0 14 Q-9 11 -13 6 Q-18 -2 -12 -13 Z" fill="#fff" stroke="#666" strokeWidth="2" />
          <path d="M-15 -6 H15" stroke="#666" strokeWidth="2" />
        </>
      )}
      {kind === "us" && <path d="M-12 -13 Q-6 -9 0 -12 Q6 -9 12 -13 L15 -8 Q11 -2 15 4 Q15 9 8 10 Q3 10 0 13 Q-3 10 -8 10 Q-15 9 -15 4 Q-11 -2 -15 -8 Z" fill="#fff" stroke="#777" strokeWidth="2" />}
      <text y={kind === "interstate" ? 9 : 5} textAnchor="middle" fontSize="13" fill="#333">{label}</text>
    </g>
  );
}

function MapTerrain() {
  const ns = "non-scaling-stroke";
  const strokes = (key: keyof Quad, color: string, width: number, dash?: string) =>
    quads.map((q) => q[key] && (
      <g key={q.m} transform={q.m}>
        <path d={q[key] as string} fill="none" stroke={color} strokeWidth={width} strokeDasharray={dash} strokeLinejoin="round" vectorEffect={ns} />
      </g>
    ));
  const areas = (key: keyof Quad, color: string) =>
    quads.map((q) => (
      <g key={q.m} transform={q.m}>
        {((q[key] as string[]) || []).map((pts) => <polygon key={pts} points={pts} fill={color} />)}
      </g>
    ));
  return (
    <MapDrawing width="1388" height="1180" viewBox="1596 489 1388 1180" role="img" aria-label="Map of the Philadelphia area">
      <rect x="1596" y="489" width="1388" height="1180" fill="#eeefeb" />
      {areas("urban", "#e8e7e0")}
      {areas("pale", "#e5e7db")}
      {areas("wood", "#dbe2cc")}
      {strokes("minor", "#dfdcd2", 2)}
      {strokes("stream", "#a6d3dc", 2)}
      {areas("lake", "#c6e6ff")}
      {quads.map((q) => (
        <g key={q.m} transform={q.m}>
          {q.river.map(([w, d]) => <path key={d} d={d} fill="none" stroke="#c6e6ff" strokeWidth={w} strokeLinejoin="round" vectorEffect={ns} />)}
        </g>
      ))}
      {strokes("border", "#e0d9e3", 6)}
      {strokes("border", "#aaa2ac", 2, "14 8")}
      {strokes("white", "#ffffff", 4)}
      {strokes("road", "#c8c8c7", 3)}
      {strokes("dash", "#8a8d8c", 1, "12 6")}
      <path d="M2300 657 L2318 663 L2332 682 L2334 705 L2318 720 L2306 705 Z" fill="#dcdbd6" stroke="#c8c8c4" />

      <g fontSize="15" fill="#2b2b2e" stroke="#f6f6f3" strokeWidth="3" paintOrder="stroke">
        {towns.map(([name, x, y, cx, cy]) => (
          <g key={name}>
            <circle cx={cx} cy={cy} r="4" fill="#fff" stroke="#777" strokeWidth="1.500" />
            <text x={x} y={y}>{name}</text>
          </g>
        ))}
        <circle cx="2940" cy="644" r="4" fill="#fff" stroke="#444" strokeWidth="2" />
        <text x="2946" y="636" fontSize="17">Trenton</text>
        <text x="1753" y="1107" fontStyle="italic" fill="#666">525 ft</text>
      </g>
      <g fontSize="16" fill="#8f8b80" stroke="#f4f3ef" strokeWidth="3" paintOrder="stroke" letterSpacing="3">
        <text x="1898" y="671">Montgomery</text>
        <text x="2274" y="1099">Philadelphia</text>
        <text x="1865" y="1290">Delaware</text>
      </g>
      <path d="M1747 1107 L1750 1115 H1744 Z" fill="#666" />
      <Shield kind="box" x={2684} y={574} label="532" />
      <Shield kind="box" x={2407} y={613} label="263" />
      <Shield kind="box" x={2284} y={920} label="309" />
      <Shield kind="box" x={2473} y={1423} label="544" />
      <Shield kind="box" x={2773} y={1325} label="70" />
      <Shield kind="interstate" x={1839} y={929} label="76" />
      <Shield kind="interstate" x={2026} y={1377} label="95" />
      <Shield kind="us" x={1673} y={1359} label="202" />

      <path d="M2666 790 L2016 1237 L2316 1243" fill="none" stroke="#888" strokeWidth="9" />
      <path d="M2671 790 L2592 946 L2551 995 L2489 1070 L2320 1264" fill="none" stroke="#888" strokeWidth="9" strokeLinejoin="round" />
      {routeArrows.map(([x, y, a]) => (
        <path key={`${x}-${y}`} transform={`translate(${x} ${y}) rotate(${a})`} d="M-39 0 H-2 M-18 -16 L-1 0 L-18 16" fill="none" stroke="#000" strokeWidth="6" strokeLinecap="round" />
      ))}
    </MapDrawing>
  );
}

function EventItem({ ev }: { ev: Ev }) {
  const [tone, name, icon] = ev;
  const Icon = icon === "cal" ? FaCalendarDay : icon === "tools" ? FaScrewdriverWrench : icon === "down" ? FaCircleArrowDown : FaCircleArrowUp;
  return (
    <EventRow $from={tone[0]} $to={tone[1] || tone[0]}>
      <EventLink href="#event"><Glyph $w={icon === "cal" ? 18 : 21}><Icon /></Glyph>{name}</EventLink>
    </EventRow>
  );
}

function DayCell({ day, weekend, tall }: { day: Day; weekend: boolean; tall: boolean }) {
  return (
    <td>
      <DayBox $tall={tall} $selected={day.selected}>
        <DayHead $muted={day.muted}>
          {day.count && <CountBadge>{day.count}</CountBadge>}
          {day.route && <CountBadge><FaRoute size={16} /></CountBadge>}
          <DayNumber $weekend={weekend}>{day.n}</DayNumber>
        </DayHead>
        {day.events && <EventList>{day.events.map((ev, i) => <EventItem key={i} ev={ev} />)}</EventList>}
      </DayBox>
    </td>
  );
}

function Week({ days, tall }: { days: Day[]; tall: boolean }) {
  return <tr>{days.map((d, i) => <DayCell key={d.n} day={d} weekend={i === 0 || i === 6} tall={tall} />)}</tr>;
}

function SelectedDay() {
  return (
    <DayPanel>
      <DayTitle>11/12/2024</DayTitle>
      <RouteNote><FaRoute size={24} />Routed by Fastest Time</RouteNote>
      <RouteActions>
        <ButtonGroup>
          <SmallButton>Optimize Route By<Caret /></SmallButton>
          <SmallButton aria-label="Route statistics"><Glyph $w={18}><FaChartSimple /></Glyph></SmallButton>
          <SmallButton aria-label="Help"><FaCircleQuestion /></SmallButton>
        </ButtonGroup>
        <SmallButton disabled>Sort By Time</SmallButton>
      </RouteActions>
      <StopList>
        {stops.map((s, i) => (
          <Stop key={s.who} $tone={s.tone}>
            <MoveButton aria-label="Move up" disabled={i === 0}><Caret up /></MoveButton>
            <MoveButton aria-label="Move down" disabled={i === stops.length - 1}><Caret /></MoveButton>
            {s.tools ? <FaScrewdriverWrench size={24} /> : <FaCircleArrowUp size={24} />}
            <span>{s.title}<b>{s.who}</b>{s.crew}</span>
          </Stop>
        ))}
      </StopList>
    </DayPanel>
  );
}

function CheckGroup({ title, initial }: { title: string; initial: boolean[] }) {
  const [on, setOn] = useState(initial);
  return (
    <OptionGroup>
      <legend>{title}</legend>
      {["Installation", "Maintenance", "Removal"].map((name, i) => (
        <Option key={name}>
          <Check checked={on[i]} onChange={() => setOn(on.map((v, j) => (j === i ? !v : v)))} />
          {name}
        </Option>
      ))}
    </OptionGroup>
  );
}

export default function App() {
  const [mode, setMode] = useState("Calendar View");
  return (
    <>
      <GlobalStyle />
      <Shell>
        <Sidebar aria-label="Main">
          <SidebarToggle aria-label="Expand menu"><Chevron dir="right" /></SidebarToggle>
          <NavList>
            {navItems.map(({ label, icon: Icon }) => (
              <li key={label}>
                <NavLink href="#nav" aria-label={label} $active={label === "Schedule"}><Icon /></NavLink>
              </li>
            ))}
          </NavList>
          <Account><Avatar>ZM</Avatar></Account>
        </Sidebar>
        <Main>
          <PageTitle>Schedule</PageTitle>
          <CrewPanel aria-expanded={false}>
            <Heading as="span">Crew Manager</Heading>
            <Chevron dir="down" />
          </CrewPanel>
          <Columns>
            <Card>
              <CardHeader>
                <Heading>Calendar</Heading>
                <HeaderActions>
                  <Button><Glyph $w={21}><FaPlus /></Glyph>New Custom Event</Button>
                  <Button><Glyph $w={18}><FaFileArrowDown /></Glyph>Export</Button>
                  <Button><Glyph $w={27}><FaRoad /></Glyph>Map</Button>
                </HeaderActions>
              </CardHeader>
              <CardBody>
                <Toolbar>
                  <div>
                    <ButtonGroup>
                      <Button>Previous</Button>
                      <Button $tone="outline">Today</Button>
                      <Button>Next</Button>
                    </ButtonGroup>
                  </div>
                  <MonthTitle>November 2024</MonthTitle>
                  <ToolbarEnd>
                    <FilterButton $tone="outline" aria-label="Filter"><FaFilter /><Caret /></FilterButton>
                    <ButtonGroup>
                      <Button $tone="active">Month</Button>
                      <Button>Week</Button>
                      <Button>Day</Button>
                    </ButtonGroup>
                  </ToolbarEnd>
                </Toolbar>
                <Calendar>
                  <thead>
                    <tr>
                      {["Sunday", "Monday", "Tuesday", "Wednesday", "Thursday", "Friday", "Saturday"].map((d) => <th key={d} scope="col">{d}</th>)}
                    </tr>
                  </thead>
                  <tbody>
                    <Week days={weeks[0]} tall={false} />
                    <Week days={weeks[1]} tall />
                    <Week days={weeks[2]} tall />
                    <tr><td colSpan={7}><SelectedDay /></td></tr>
                    <Week days={weeks[3]} tall={false} />
                  </tbody>
                </Calendar>
              </CardBody>
            </Card>
            <Card>
              <CardHeader><Heading>Map</Heading></CardHeader>
              <CardBody>
                <Options>
                  <OptionGroup>
                    <legend>Date Control</legend>
                    {["Calendar View", "Date Picker"].map((name) => (
                      <Option key={name}>
                        <Radio name="mode" checked={mode === name} onChange={() => setMode(name)} />
                        {name}
                      </Option>
                    ))}
                  </OptionGroup>
                  <CheckGroup title="Scheduled" initial={[true, true, true]} />
                  <CheckGroup title="Unscheduled" initial={[true, false, false]} />
                </Options>
                <MapFrame>
                  <MapTerrain />
                  {pins.map(([x, y, tone, glyph], i) => {
                    const dark = tone === "r" || tone === "m";
                    return (
                      <PinButton key={i} $x={x} $y={y} $fill={tones[tone]} $dark={dark} aria-label={glyph === "2" ? undefined : "Job"}>
                        <PinGlyph glyph={glyph} dark={dark} />
                      </PinButton>
                    );
                  })}
                  <MapControls>
                    <ControlButton aria-label="Zoom in">
                      <svg width="18" height="18" viewBox="0 0 18 18" stroke="#333" strokeWidth="4" strokeLinecap="round"><path d="M9 2 V16 M2 9 H16" /></svg>
                    </ControlButton>
                    <ControlButton aria-label="Zoom out">
                      <svg width="18" height="18" viewBox="0 0 18 18" stroke="#333" strokeWidth="4" strokeLinecap="round"><path d="M2 9 H16" /></svg>
                    </ControlButton>
                    <ControlButton aria-label="Reset north">
                      <svg width="12" height="28" viewBox="0 0 12 28"><path d="M6 0 L12 13 H0 Z" fill="#333" /><path d="M6 28 L12 15 H0 Z" fill="#ccc" /></svg>
                    </ControlButton>
                  </MapControls>
                  <MapControls $right>
                    <ControlButton aria-label="Select area">
                      <svg width="18" height="18" viewBox="0 0 20 20" fill="#000">
                        <path d="M4 4 H16 V16 H4 Z" fill="none" stroke="#000" strokeWidth="3" />
                        <circle cx="3.500" cy="3.500" r="3" /><circle cx="16.500" cy="3.500" r="3" />
                        <circle cx="3.500" cy="16.500" r="3" /><circle cx="16.500" cy="16.500" r="3" />
                      </svg>
                    </ControlButton>
                    <ControlButton aria-label="Delete"><FaTrashCan size={20} /></ControlButton>
                  </MapControls>
                </MapFrame>
              </CardBody>
            </Card>
          </Columns>
        </Main>
      </Shell>
    </>
  );
}
